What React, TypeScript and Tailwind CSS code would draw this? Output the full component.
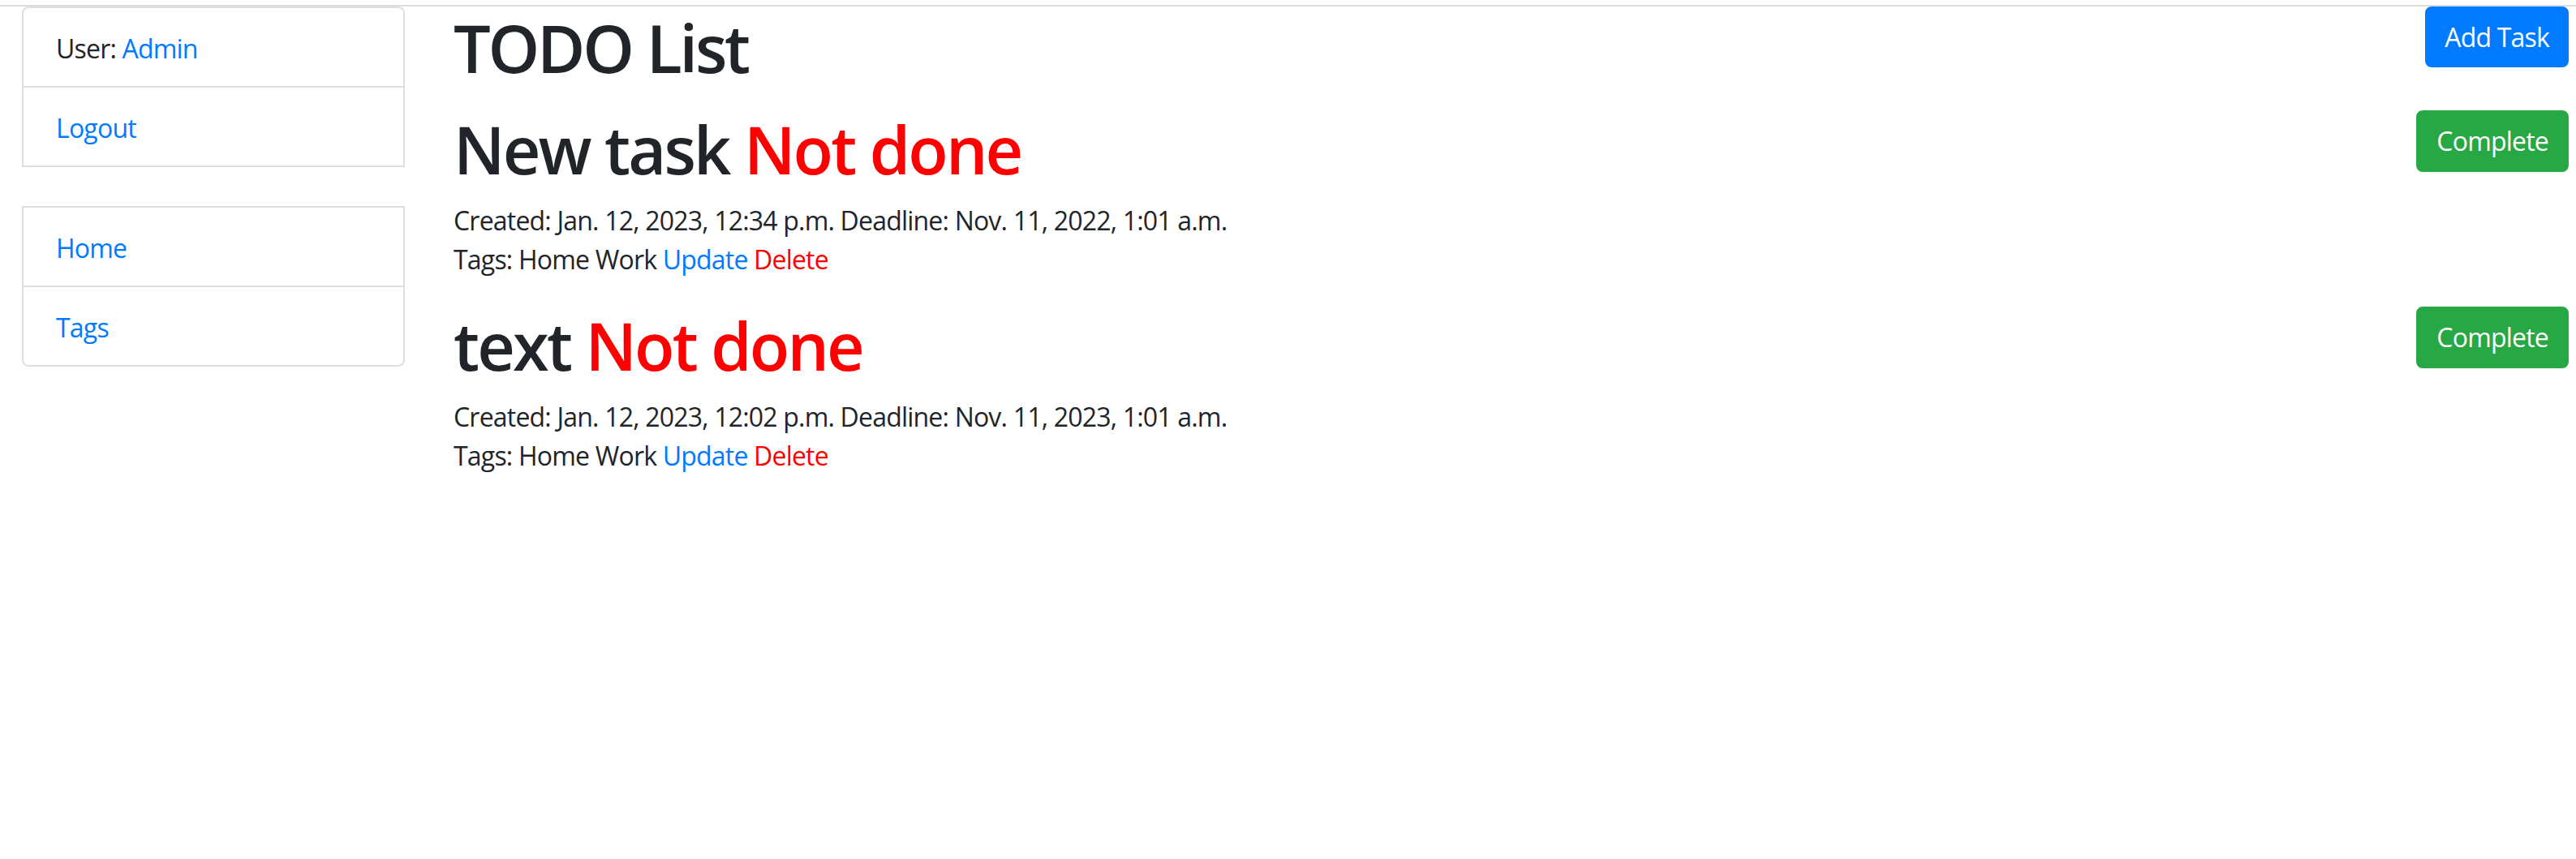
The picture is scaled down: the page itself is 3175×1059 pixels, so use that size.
import React from "react";

const tasks = [
  {
    title: "New task",
    created: "Jan. 12, 2023, 12:34 p.m.",
    deadline: "Nov. 11, 2022, 1:01 a.m.",
  },
  {
    title: "text",
    created: "Jan. 12, 2023, 12:02 p.m.",
    deadline: "Nov. 11, 2023, 1:01 a.m.",
  },
];

function Task({ t, first }: { t: (typeof tasks)[number]; first: boolean }) {
  return (
    <div className={`flex items-start justify-between ${first ? "mt-[28px]" : "mt-[33px]"}`}>
      <div>
        <h1 className="mb-[16px] text-[81px] font-semibold leading-[97px] tracking-[-2.8px]">
          {t.title} <span className="text-[#ff0000]">Not done</span>
        </h1>
        <p className="text-[32px] leading-[48px]">
          Created: {t.created} Deadline: {t.deadline}
        </p>
        <p className="text-[32px] leading-[48px]">
          Tags: Home Work <a href="#" className="text-[#007bff]">Update</a>{" "}
          <a href="#" className="text-[#ff0000]">Delete</a>
        </p>
      </div>
      <button className="mt-[1px] h-[76px] rounded-[8px] border-2 border-[#28a745] bg-[#28a745] px-[23px] text-[32px] leading-[48px] text-white">
        Complete
      </button>
    </div>
  );
}

export default function App() {
  return (
    <div className="min-h-screen bg-white font-['Open_Sans',sans-serif] tracking-[-0.8px] text-[#212529]">
      <div className="pt-[6px]">
        <div className="h-[2px] bg-[#dedede]" />
      </div>
      <div className="flex pl-[27px] pr-[9px]">
        <aside className="w-[472px] shrink-0 text-[32px] leading-[48px]">
          <div className="rounded-t-[8px] border-2 border-[#dfdfdf]">
            <div className="px-[40px] pb-[22px] pt-[26px]">
              User: <a href="#" className="text-[#007bff]">Admin</a>
            </div>
            <div className="border-t-2 border-[#dfdfdf] px-[40px] pb-[22px] pt-[26px]">
              <a href="#" className="text-[#007bff]">Logout</a>
            </div>
          </div>
          <div className="mt-[48px] rounded-b-[8px] border-2 border-[#dfdfdf]">
            <div className="px-[40px] pb-[22px] pt-[26px]">
              <a href="#" className="text-[#007bff]">Home</a>
            </div>
            <div className="border-t-2 border-[#dfdfdf] px-[40px] pb-[22px] pt-[26px]">
              <a href="#" className="text-[#007bff]">Tags</a>
            </div>
          </div>
        </aside>
        <main className="ml-[60px] flex-1">
          <div className="flex items-start justify-between">
            <h1 className="pt-[2px] text-[81px] font-semibold leading-[97px] tracking-[-3.2px]">TODO List</h1>
            <button className="h-[75px] rounded-[8px] border-2 border-[#007bff] bg-[#007bff] px-[22px] text-[32px] leading-[48px] text-white">
              Add Task
            </button>
          </div>
          {tasks.map((t, i) => (
            <Task key={i} t={t} first={i === 0} />
          ))}
        </main>
      </div>
    </div>
  );
}
